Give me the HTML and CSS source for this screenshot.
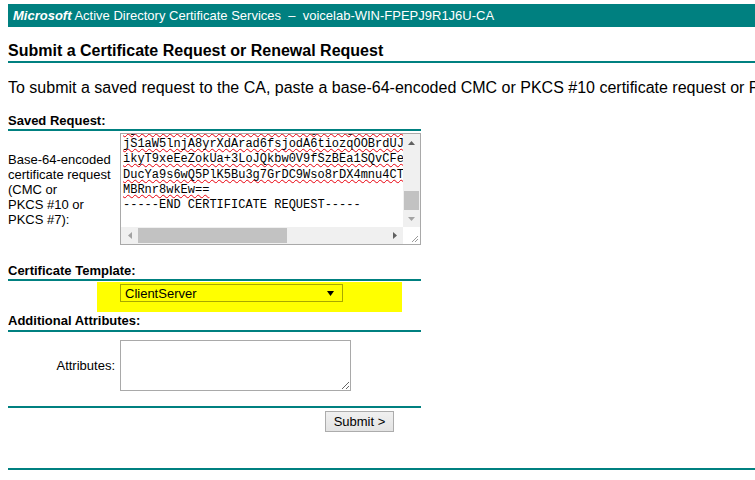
FILE: index.html
```html
<!DOCTYPE html>
<html>
<head>
<meta charset="utf-8">
<title>Microsoft Active Directory Certificate Services</title>
<link rel="stylesheet" href="styles.css">
</head>
<body>
<div class="topbar"><span class="brand">Microsoft</span> Active Directory Certificate Services &nbsp;–&nbsp; voicelab-WIN-FPEPJ9R1J6U-CA</div>
<h1 class="page-title">Submit a Certificate Request or Renewal Request</h1>
<p class="intro">To submit a saved request to the CA, paste a base-64-encoded CMC or PKCS #10 certificate request or PKCS #7 renewal request generated by an external source (such as a Web server) in the Saved Request box.</p>

<div class="form">
  <div class="section">Saved Request:</div>
  <div class="row">
    <div class="label">Base-64-encoded<br>certificate request<br>(CMC or<br>PKCS #10 or<br>PKCS #7):</div>
    <div class="textbox">
      <div class="tb-view">
        <div class="tb-text"><div class="sq">WjELMAkGA1UEBhMC+VVMxEzARBgNVBAgTCldhc2gxEDAOBgNV</div><div class="sq">jS1aW5lnjA8yrXdArad6fsjodA6tiozqOOBrdUJhQ2</div><div class="sq">ikyT9xeEeZokUa+3LoJQkbw0V9fSzBEa1SQvCFeR5k</div><div class="sq">DucYa9s6wQ5PlK5Bu3g7GrDC9Wso8rDX4mnu4CTq0a</div><div class="sq">MBRnr8wkEw==</div><div>-----END CERTIFICATE REQUEST-----</div></div>
      </div>
      <div class="vscroll">
        <div class="sb-btn"><svg width="7" height="4" viewBox="0 0 7 4"><polygon points="3.5,0 7,4 0,4" fill="#606060"/></svg></div>
        <div class="v-track"><div class="v-thumb"></div></div>
        <div class="sb-btn"><svg width="7" height="4" viewBox="0 0 7 4"><polygon points="0,0 7,0 3.5,4" fill="#a3a3a3"/></svg></div>
      </div>
      <div class="hscroll">
        <div class="sb-btn"><svg width="4" height="7" viewBox="0 0 4 7"><polygon points="4,0 4,7 0,3.5" fill="#a3a3a3"/></svg></div>
        <div class="h-track"><div class="h-thumb"></div></div>
        <div class="sb-btn"><svg width="4" height="7" viewBox="0 0 4 7"><polygon points="0,0 4,3.5 0,7" fill="#606060"/></svg></div>
      </div>
      <div class="corner"><svg width="17" height="17" viewBox="0 0 17 17"><line x1="15" y1="9" x2="9" y2="15" stroke="#9a9a9a" stroke-width="1"/><line x1="15" y1="12" x2="12" y2="15" stroke="#9a9a9a" stroke-width="1"/></svg></div>
    </div>
  </div>

  <div class="section section-gap">Certificate Template:</div>
  <div class="highlight">
    <div class="select"><span>ClientServer</span><svg width="7" height="5" viewBox="0 0 7 5"><polygon points="0,0 7,0 3.5,5" fill="#000"/></svg></div>
  </div>

  <div class="section section-tall">Additional Attributes:</div>
  <div class="row attr-row">
    <label class="label label-right" for="attrs">Attributes:</label>
    <textarea id="attrs" class="attrs"></textarea>
  </div>

  <div class="divider"></div>
  <div class="actions"><button class="submit" type="button">Submit &gt;</button></div>
</div>
<div class="footer-line"></div>
</body>
</html>
```

FILE: styles.css
```css
* { box-sizing: border-box; }
html { margin: 0; padding: 0; }
body {
  margin: 4px 0 0 8px;
  padding: 0;
  font-family: "Liberation Sans", Arial, sans-serif;
  color: #000;
  background: #fff;
  overflow: hidden;
}
.topbar {
  height: 23px;
  line-height: 23px;
  background: #008080;
  color: #fff;
  font-size: 13px;
  padding-left: 5px;
  white-space: nowrap;
}
.brand { font-weight: bold; font-style: italic; }
.page-title {
  margin: 15px 0 0;
  font-size: 16px;
  line-height: 18px;
  font-weight: bold;
  padding-bottom: 1px;
  border-bottom: 2px solid #008080;
}
.intro {
  margin: 16px 0 0;
  font-size: 16px;
  line-height: 18px;
  white-space: nowrap;
}
.form { width: 413px; font-size: 13px; }
.section {
  font-weight: bold;
  line-height: 15px;
  padding-bottom: 1px;
  border-bottom: 2px solid #008080;
  margin-top: 16px;
}
.section-gap { margin-top: 18px; }
.section-tall { margin-top: 0; padding-top: 1px; padding-bottom: 2px; }
.row {
  display: grid;
  grid-template-columns: 112px auto;
  align-items: center;
  margin-top: 2px;
}
.label { line-height: 15px; }
.label-right { text-align: right; padding-right: 5px; }

.textbox {
  width: 301px;
  height: 112px;
  border: 1px solid #a9a9a9;
  display: grid;
  grid-template-columns: 282px 17px;
  grid-template-rows: 93px 17px;
  background: #fff;
}
.tb-view { overflow: hidden; }
.tb-text {
  margin-top: -12px;
  padding-left: 2px;
  font-family: "Liberation Mono", "Courier New", monospace;
  font-size: 12px;
  line-height: 15.2px;
  white-space: pre;
}
.sq {
  text-decoration: underline wavy #e8000b;
  text-decoration-thickness: 1px;
  text-decoration-skip-ink: none;
  text-underline-offset: 1px;
}
.vscroll {
  display: flex;
  flex-direction: column;
  background: #f0f0f0;
}
.hscroll {
  display: flex;
  background: #f0f0f0;
}
.sb-btn {
  width: 17px;
  height: 17px;
  flex: none;
  display: flex;
  align-items: center;
  justify-content: center;
}
.v-track {
  flex: 1;
  display: flex;
  flex-direction: column;
  justify-content: flex-end;
  padding: 0 1px;
}
.v-thumb { height: 19px; background: #c2c2c2; }
.h-track {
  flex: 1;
  display: flex;
  padding: 1px 0;
}
.h-thumb { width: 149px; background: #c2c2c2; }
.corner { background: #fff; }
.corner svg { display: block; }

.highlight {
  margin: 1px 0 0 89px;
  width: 305px;
  height: 30px;
  background: #ffff00;
  padding: 2px 0 0 23px;
}
.select {
  width: 223px;
  height: 18px;
  border: 1px solid #a8a800;
  display: flex;
  align-items: center;
  justify-content: space-between;
  padding: 0 8px 0 4px;
  font-size: 13px;
}
.attr-row { margin-top: 8px; }
.attrs {
  width: 231px;
  height: 51px;
  border: 1px solid #a9a9a9;
  margin: 0;
  padding: 2px;
  font-family: "Liberation Mono", monospace;
  font-size: 12px;
  resize: both;
  border-radius: 0;
}
.divider {
  margin-top: 15px;
  border-bottom: 2px solid #008080;
}
.actions {
  display: flex;
  justify-content: flex-end;
  padding-right: 27px;
  margin-top: 3px;
}
.submit {
  width: 69px;
  height: 21px;
  margin: 0;
  padding: 0;
  font-family: "Liberation Sans", Arial, sans-serif;
  font-size: 13px;
  color: #000;
  border: 1px solid #acacac;
  border-radius: 0;
  background: linear-gradient(#f0f0f0, #e3e3e3);
}
.footer-line {
  margin-top: 36px;
  border-bottom: 2px solid #008080;
}
```
